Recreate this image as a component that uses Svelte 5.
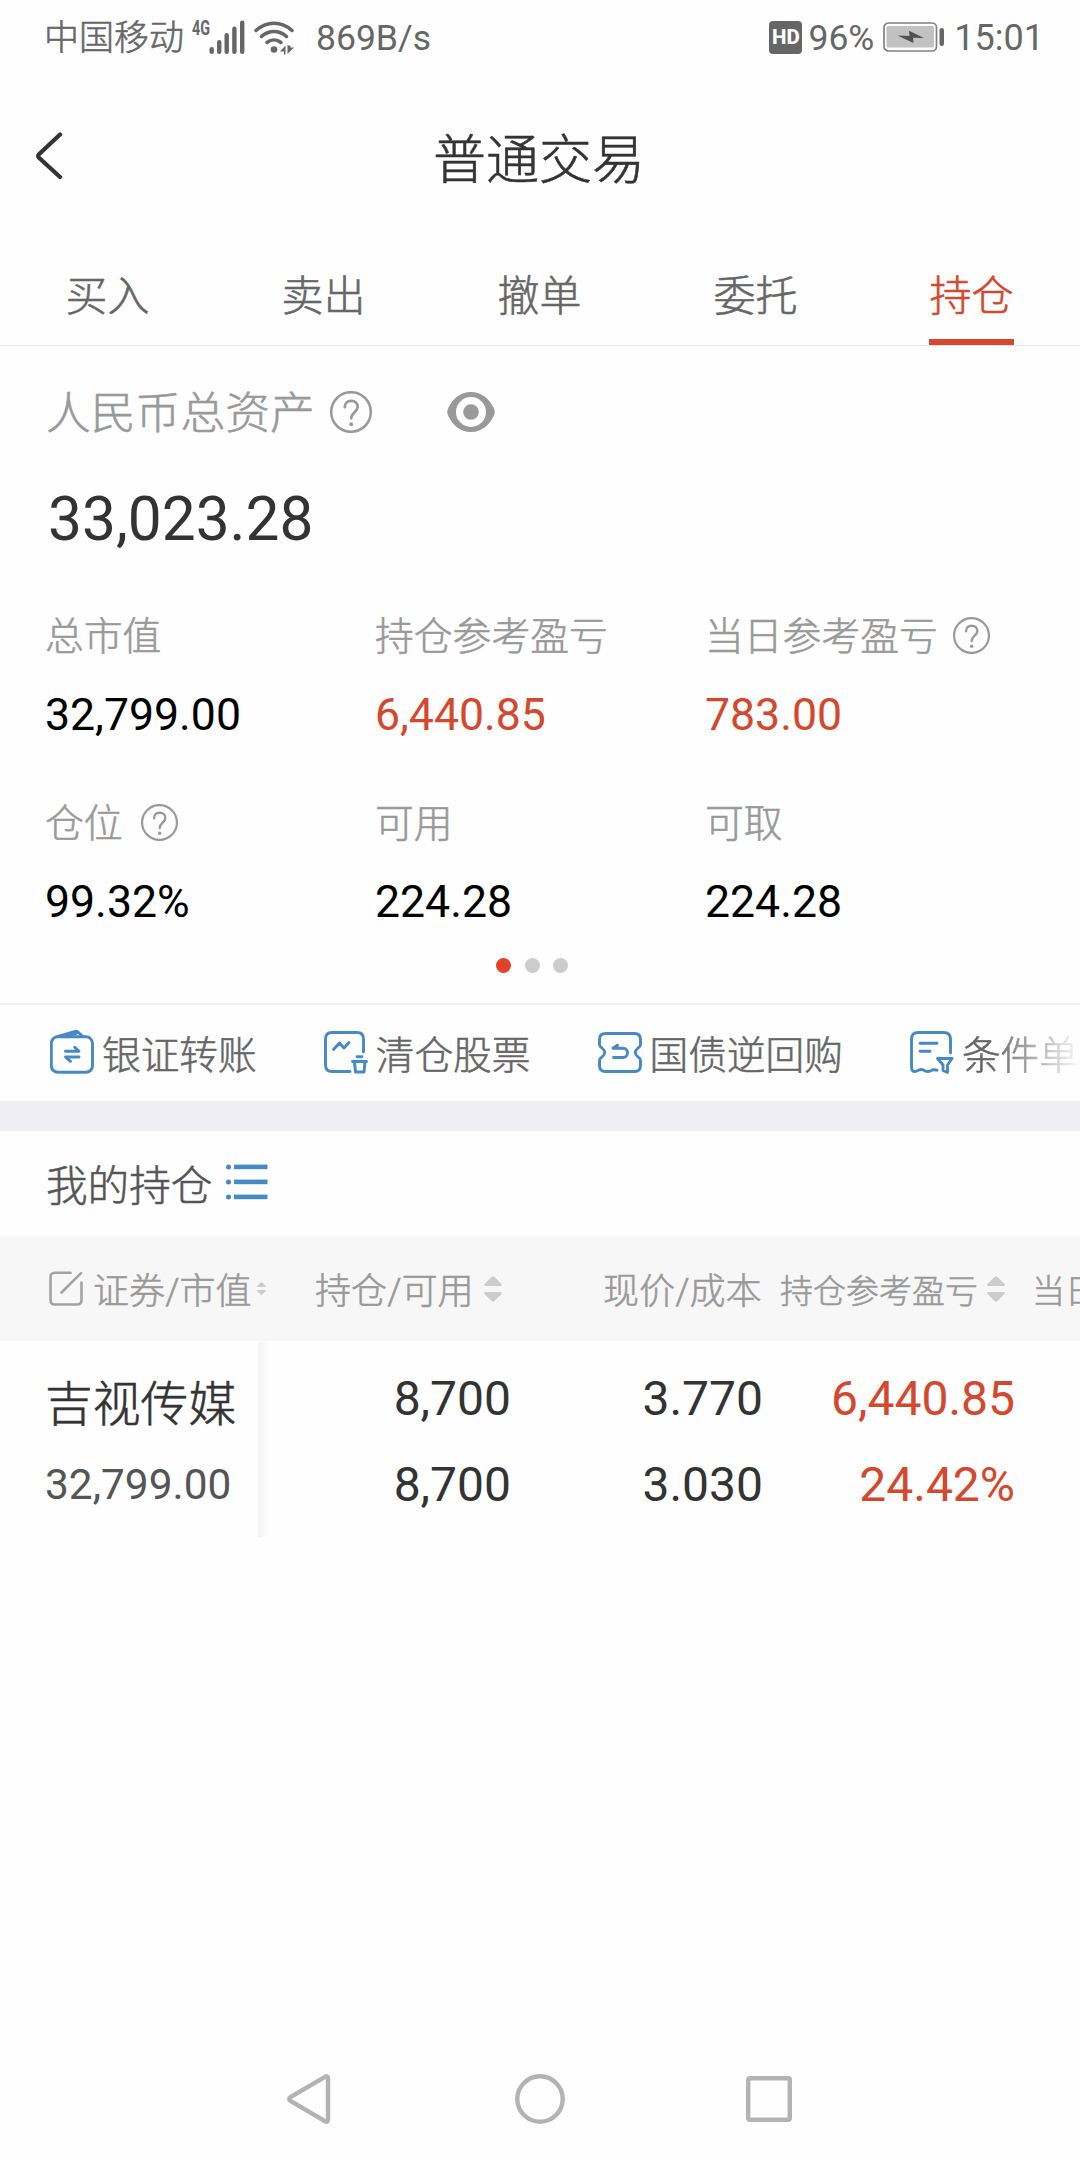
<script>
  const tabs = ['买入', '卖出', '撤单', '委托', '持仓'];
  const activeTab = '持仓';

  const metrics = [
    { label: '总市值', value: '32,799.00' },
    { label: '持仓参考盈亏', value: '6,440.85', up: true },
    { label: '当日参考盈亏', value: '783.00', up: true, help: 'near' },
    { label: '仓位', value: '99.32%', help: 'far' },
    { label: '可用', value: '224.28' },
    { label: '可取', value: '224.28' },
  ];
</script>

{#snippet help(cls)}
  <svg class={cls} viewBox="0 0 42 42" fill="none" stroke="#999" stroke-linecap="round">
    <circle cx="21" cy="21" r="19.8" stroke-width="2.5" />
    <path d="M14.8 16.2c0-4 2.8-6.3 6.4-6.3 3.7 0 6.5 2.4 6.5 5.9 0 5.2-6.5 5.7-6.5 11.5" stroke-width="2.7" />
    <circle cx="21.2" cy="33.2" r="1.9" fill="#999" stroke="none" />
  </svg>
{/snippet}

{#snippet sort(cls)}
  <svg class={cls} viewBox="0 0 18 26" fill="#ccc">
    <path d="M7.6.9Q9-.4 10.4.9L17.500 8q1 2-1 2h-15q-2 0-1-2z" />
    <path d="M7.6 25.1Q9 26.4 10.4 25.1L17.500 18q1-2-1-2h-15q-2 0-1 2z" />
  </svg>
{/snippet}

<div class="screen">
  <div class="status">
    <span class="carrier">中国移动</span>
    <svg class="signal" viewBox="0 0 56 36" fill="#666">
      <text x="1" y="16" font-size="20.5" font-weight="700" textLength="18" lengthAdjust="spacingAndGlyphs">4G</text>
      <rect x="18.5" y="28" width="4.4" height="7" rx="2.2" />
      <rect x="26" y="21" width="4.4" height="14" rx="2.2" />
      <rect x="33.5" y="14" width="4.4" height="21" rx="2.2" />
      <rect x="41.2" y="7.5" width="4.4" height="27.5" rx="2.2" />
      <rect x="49" y="1.5" width="4.4" height="33.5" rx="2.2" />
    </svg>
    <svg class="wifi" viewBox="0 0 40 36" fill="none" stroke="#666" stroke-width="3.5" stroke-linecap="round">
      <path d="M2 11.500C12.500 1.800 27.500 1.800 38 11.500" />
      <path d="M7.500 17.500c7.500-6.700 17.500-6.700 25 0" />
      <path d="M13 23.500c4.200-3.300 9.800-3.300 14 0" />
      <circle cx="20" cy="30.500" r="3.300" fill="#666" stroke="none" />
      <path d="M31.500 26.500v9h-1.500v-3h-4zM33.500 26v9l6.500-6.500h-3.500v-1.500z" fill="#666" stroke="none" />
    </svg>
    <span class="speed">869B/s</span>
    <span class="spacer"></span>
    <span class="hd">HD</span>
    <span class="pct">96%</span>
    <svg class="battery" viewBox="0 0 62 30">
      <rect x="1" y="1" width="52.5" height="28" rx="4.5" fill="none" stroke="#808080" stroke-width="1.7" />
      <rect x="3.5" y="4" width="47.5" height="21.5" rx="1.5" fill="#c1c1c1" />
      <path d="M14.500 13.500l12 .5-.5-5.200 15 7.200-11-.3.500 5.300z" fill="#505050" />
      <rect x="56.5" y="6" width="4.5" height="18" rx="2.2" fill="#666" />
    </svg>
    <span class="clock">15:01</span>
  </div>

  <header>
    <svg class="back" viewBox="0 0 28 50" fill="none" stroke="#333" stroke-width="4.2" stroke-linecap="round" stroke-linejoin="round">
      <path d="M25 3.500L4 23.300q-1.600 1.700 0 3.400L25 46" />
    </svg>
    <h1>普通交易</h1>
  </header>

  <nav class="tabs">
    {#each tabs as tab}
      <div class="tab" class:active={tab === activeTab}><span>{tab}</span></div>
    {/each}
  </nav>

  <section class="summary">
    <div class="asset">
      <span>人民币总资产</span>
      {@render help('help-lg')}
      <svg class="eye" viewBox="0 0 48 40">
        <path d="M24 0C35 0 42 7 46.500 15.500q2.500 4.500 0 9C42 33 35 40 24 40S6 33 1.500 24.500q-2.500-4.500 0-9C6 7 13 0 24 0z" fill="#999" />
        <circle cx="24" cy="20" r="15" fill="#fff" />
        <circle cx="24" cy="20" r="7.8" fill="#999" />
      </svg>
    </div>
    <div class="total">33,023.28</div>
    <div class="metrics">
      {#each metrics as m}
        <div class="metric">
          <div class="label">
            <span>{m.label}</span>
            {#if m.help}{@render help('help-sm ' + m.help)}{/if}
          </div>
          <div class="value" class:up={m.up}>{m.value}</div>
        </div>
      {/each}
    </div>
    <div class="dots"><i class="on"></i><i></i><i></i></div>
  </section>

  <section class="actions">
    <div class="action">
      <svg viewBox="0 0 44 44">
        <rect x="1.3" y="6.8" width="41.2" height="35.5" rx="6.5" />
        <path d="M8 6.500L24.500 1.600q2.500-.9 4 1L33 6.500M13 6L26 3.500" />
        <path d="M15.500 21.300h13.500l-4.300-4M29 27H15.500l5 4.300" />
      </svg>
      <span>银证转账</span>
    </div>
    <div class="action">
      <svg viewBox="0 0 44 44">
        <path d="M39.500 22V9q0-6.500-6.500-6.500H8Q1.500 2.500 1.500 9v26q0 6.500 6.500 6.500h18" />
        <path d="M9.500 19.500l6-6.500 4.500 5 5-5.500" />
        <path d="M33 26.700h5M28.500 31.500h14M30.500 32l1 10h8.500l1-10" />
      </svg>
      <span>清仓股票</span>
    </div>
    <div class="action">
      <svg viewBox="0 0 44 44">
        <path d="M7.500 3.500h29q6 0 6 6v5q0 2-2.500 3.500-5.500 4.500 0 9 2.500 1.500 2.500 3.500v5q0 6-6 6h-29q-6 0-6-6v-5q0-2 2.500-3.500 5.500-4.500 0-9-2.500-1.500-2.500-3.500v-5q0-6 6-6z" />
        <path d="M19.500 15.200l-4.500 3H25c6 0 6 9.300 0 9.300H15.500" />
      </svg>
      <span>国债逆回购</span>
    </div>
    <div class="action">
      <svg viewBox="0 0 44 44">
        <path d="M40.500 23V9.500q0-7-7-7h-25q-7 0-7 7V37q0 6 5.500 4 4.500-3 8 0 4 1.500 7-1 3-.5 5 .2" />
        <path d="M10 13.300h17M10 21.300h10" />
        <path d="M27.500 28.500h14.500l-4.500 6.500v7.500l-4.500-2v-5.500z" />
      </svg>
      <span>条件单</span>
    </div>
  </section>

  <div class="band"></div>

  <div class="section-title">
    <span>我的持仓</span>
    <svg viewBox="0 0 42 36" fill="#4589c5">
      <circle cx="2.5" cy="3" r="2.5" /><rect x="8" y=".6" width="33.5" height="4.6" />
      <circle cx="2.5" cy="18" r="2.5" /><rect x="8" y="15.6" width="33.5" height="4.6" />
      <circle cx="2.5" cy="33" r="2.5" /><rect x="8" y="30.6" width="33.5" height="4.6" />
    </svg>
  </div>

  <div class="thead">
    <div class="th first">
      <svg class="edit" viewBox="0 0 34 35" fill="none" stroke="#a3a3a3" stroke-width="2.6" stroke-linecap="round">
        <path d="M21.500 1.800H6Q1.500 1.800 1.500 6.300V29q0 4.500 4.500 4.500h22q4.500 0 4.500-4.500V11.500M32 2.200L12.500 21.500" />
      </svg>
      <span>证券/市值</span>
      {@render sort('sort-sm')}
    </div>
    <div class="th second"><span>持仓/可用</span>{@render sort('sort-lg')}</div>
    <div class="th third"><span>现价/成本</span></div>
    <div class="th fourth"><span>持仓参考盈亏</span>{@render sort('sort-lg')}</div>
    <div class="th fifth"><span>当日参考盈亏</span></div>
  </div>

  <div class="row">
    <div class="cell stock"><b>吉视传媒</b><span>32,799.00</span></div>
    <div class="shade"></div>
    <div class="cell qty"><span>8,700</span><span>8,700</span></div>
    <div class="cell price"><span>3.770</span><span>3.030</span></div>
    <div class="cell profit"><span>6,440.85</span><span>24.42%</span></div>
  </div>

  <div class="sysnav">
    <svg viewBox="0 0 44 50"><path d="M38.500 2.600L3.500 23q-2.500 2 0 4l35 20.400q2.500 1 2.500-1.600V4.200q0-2.600-2.500-1.600z" /></svg>
    <svg viewBox="0 0 50 50"><circle cx="25" cy="25" r="22.7" /></svg>
    <svg viewBox="0 0 46 46"><rect x="2.2" y="2.2" width="41.6" height="41.6" rx="1.5" /></svg>
  </div>
</div>

<style>
  :global(body) {
    background: #fefefe;
  }
  .screen {
    width: 1080px;
    height: 2160px;
    display: flex;
    flex-direction: column;
    overflow: hidden;
    background: #fefefe;
    font-family: Roboto, 'Noto Sans CJK SC', sans-serif;
    color: #333;
    white-space: nowrap;
  }
  .screen > * {
    flex: none;
    box-sizing: border-box;
  }
  svg {
    display: block;
    flex: none;
  }
  /* Light CJK strokes thickened slightly, between Light and Regular */
  .carrier,
  h1,
  .tab,
  .asset span,
  .label span,
  .action span,
  .section-title span,
  .th span,
  .stock b {
    -webkit-text-stroke: 0.55px currentColor;
  }

  .status {
    height: 74px;
    padding: 0 36px 0 44px;
    display: flex;
    align-items: center;
    font-size: 36px;
    line-height: 42px;
    color: #666;
  }
  .carrier {
    font-size: 35px;
    font-weight: 300;
    padding-top: 4px;
  }
  .signal {
    width: 56px;
    height: 36px;
    margin-left: 7px;
    overflow: visible;
  }
  .wifi {
    width: 40px;
    height: 36px;
    margin-left: 7px;
  }
  .speed {
    margin-left: 22px;
    padding-top: 1px;
    font-size: 35.5px;
  }
  .spacer {
    flex: 1;
  }
  .hd {
    width: 33px;
    height: 33px;
    border-radius: 4px;
    background: #666;
    color: #fefefe;
    font-size: 20.5px;
    font-weight: 800;
    line-height: 33px;
    text-align: center;
  }
  .pct {
    margin-left: 6px;
    font-size: 35.5px;
    padding-top: 1px;
  }
  .battery {
    width: 62px;
    height: 30px;
    margin-left: 9px;
  }
  .clock {
    margin-left: 9px;
    font-size: 36px;
    padding-top: 1px;
  }

  header {
    height: 168px;
    padding: 0 37px 0 35px;
    display: grid;
    grid-template-columns: 28px 1fr 28px;
    align-items: center;
  }
  .back {
    width: 28px;
    height: 50px;
    margin-top: -4px;
  }
  h1 {
    margin: 0;
    padding-top: 6px;
    font-size: 53px;
    line-height: 60px;
    font-weight: 300;
    text-align: center;
  }

  .tabs {
    height: 104px;
    display: grid;
    grid-template-columns: repeat(5, 1fr);
    border-bottom: 1px solid #e8e8e8;
  }
  .tab {
    display: flex;
    justify-content: center;
    font-size: 42px;
    font-weight: 300;
    color: #666;
    padding-right: 1px;
  }
  .tab span {
    box-sizing: border-box;
    height: 103px;
    line-height: 109px;
    border-bottom: 6px solid transparent;
  }
  .tab.active {
    color: #d4482d;
  }
  .tab.active span {
    border-color: #d8472b;
  }

  .summary {
    height: 657px;
    padding-left: 46px;
  }
  .asset {
    height: 132px;
    display: flex;
    align-items: center;
    font-size: 44.8px;
    line-height: 50px;
    font-weight: 300;
    color: #999;
  }
  .asset span {
    padding-top: 4px;
  }
  .help-lg {
    width: 42px;
    height: 42px;
    margin-left: 15px;
  }
  .eye {
    width: 48px;
    height: 40px;
    margin-left: 75px;
  }
  .total {
    height: 81px;
    line-height: 84px;
    padding-left: 2px;
    font-size: 60.4px;
  }
  .metrics {
    display: grid;
    grid-template-columns: repeat(3, 330px);
    row-gap: 47px;
    padding-top: 46px;
    margin-left: -1px;
  }
  .metric {
    height: 140px;
  }
  .label {
    height: 60px;
    display: flex;
    align-items: center;
    font-size: 38.8px;
    line-height: 44px;
    font-weight: 300;
    color: #999;
  }
  .label span {
    padding-top: 4px;
  }
  .help-sm {
    width: 37px;
    height: 37px;
    margin-left: 15px;
  }
  .help-sm.far {
    margin-left: 18px;
  }
  .value {
    margin-top: 20px;
    line-height: 61px;
    font-size: 44.6px;
    color: #000;
  }
  .value.up,
  .profit {
    color: #d4482d;
  }
  .dots {
    display: flex;
    gap: 13.5px;
    padding: 26px 0 0 450px;
  }
  .dots i {
    width: 15px;
    height: 15px;
    border-radius: 50%;
    background: #ccc;
  }
  .dots .on {
    background: #e04328;
  }

  .actions {
    height: 98px;
    padding-left: 50px;
    border-top: 2px solid #f1f1f1;
    display: flex;
    align-items: center;
    gap: 67px;
    font-size: 38.7px;
    line-height: 44px;
    font-weight: 300;
    color: #666;
    overflow: hidden;
  }
  .action {
    display: flex;
    align-items: center;
    flex: none;
    gap: 8px;
  }
  .action span {
    padding-top: 6px;
  }
  .action:last-child span {
    -webkit-mask-image: linear-gradient(to right, #000 30px, transparent 120px);
    mask-image: linear-gradient(to right, #000 30px, transparent 120px);
  }
  .action svg {
    width: 44px;
    height: 44px;
    margin-top: -3px;
    fill: none;
    stroke: #4589c5;
    stroke-width: 2.9;
    stroke-linecap: round;
    stroke-linejoin: round;
  }

  .band {
    height: 30px;
    background: #eeeef4;
  }

  .section-title {
    height: 105px;
    padding-left: 46px;
    display: flex;
    align-items: center;
    font-size: 41.6px;
    line-height: 48px;
    font-weight: 300;
    color: #555;
  }
  .section-title span {
    padding-top: 7px;
  }
  .section-title svg {
    width: 42px;
    height: 36px;
    margin-left: 14px;
    margin-top: -3px;
  }

  .thead {
    height: 105px;
    background: #f7f7f7;
    display: flex;
    overflow: hidden;
    font-size: 36.1px;
    line-height: 44px;
    font-weight: 300;
    color: #999;
  }
  .th {
    flex: none;
    display: flex;
    align-items: center;
    box-sizing: border-box;
  }
  .th span {
    padding-top: 7px;
  }
  .first {
    width: 268px;
    padding-left: 49px;
  }
  .edit {
    width: 34px;
    height: 35px;
    margin-right: 10px;
  }
  .sort-sm {
    width: 9px;
    height: 13px;
    margin-left: 5px;
  }
  .sort-lg {
    width: 18px;
    height: 26px;
    margin-left: 10px;
  }
  .second {
    width: 335px;
    padding-left: 47px;
  }
  .third {
    width: 177px;
  }
  .fourth {
    width: 252px;
    font-size: 33px;
  }
  .fourth .sort-lg {
    margin-left: 9px;
  }
  .fifth {
    font-size: 33px;
  }

  .row {
    height: 196px;
    padding-top: 1px;
    display: flex;
    font-size: 48px;
  }
  .cell {
    box-sizing: border-box;
    flex: none;
    display: flex;
    flex-direction: column;
    text-align: right;
    line-height: 86px;
    padding-top: 14px;
  }
  .stock {
    width: 258px;
    padding-left: 45px;
    text-align: left;
  }
  .stock b {
    font-size: 47.8px;
    font-weight: 300;
    line-height: 98px;
    height: 86px;
  }
  .stock span {
    font-size: 42.4px;
    color: #555;
  }
  .shade {
    width: 11px;
    background: linear-gradient(to right, #f3f3f3, #fefefe);
  }
  .qty {
    width: 242px;
  }
  .price {
    width: 252px;
  }
  .profit {
    width: 252px;
  }

  .sysnav {
    height: 122px;
    margin-top: auto;
    display: flex;
    align-items: center;
    padding-left: 287px;
  }
  .sysnav svg {
    fill: none;
    stroke: #b3b3b3;
    stroke-width: 4.4;
  }
  .sysnav svg:nth-child(1) {
    width: 44px;
    height: 50px;
  }
  .sysnav svg:nth-child(2) {
    width: 50px;
    height: 50px;
    margin-left: 184px;
  }
  .sysnav svg:nth-child(3) {
    width: 46px;
    height: 46px;
    margin-left: 181px;
  }
</style>
